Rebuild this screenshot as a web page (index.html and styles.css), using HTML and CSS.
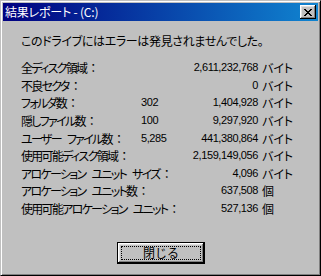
FILE: index.html
```html
<!DOCTYPE html>
<html lang="ja">
<head>
<meta charset="utf-8">
<title>結果レポート</title>
<link rel="stylesheet" href="styles.css">
</head>
<body>
<div class="window">
  <div class="titlebar">
    <span class="title">結果レポート - (C:)</span>
    <button class="close" aria-label="閉じる">
      <svg width="8" height="7" viewBox="0 0 8 7" shape-rendering="crispEdges"><path d="M0 0h2v1h-2zM6 0h2v1h-2zM1 1h2v1h-2zM5 1h2v1h-2zM2 2h4v1h-4zM3 3h2v1h-2zM2 4h4v1h-4zM1 5h2v1h-2zM5 5h2v1h-2zM0 6h2v1h-2zM6 6h2v1h-2z" fill="#000"/></svg>
    </button>
  </div>
  <div class="body">
    <p class="msg">このドライブにはエラーは発見されませんでした。</p>
    <div class="stats">
      <div class="row"><span class="label">全ディスク領域<span class="colon">：</span></span><span class="num">2,611,232,768</span><span class="unit">バイト</span></div>
      <div class="row"><span class="label">不良セクタ<span class="colon">：</span></span><span class="num">0</span><span class="unit">バイト</span></div>
      <div class="row"><span class="label">フォルダ数<span class="colon">：</span></span><span class="mid">302</span><span class="num">1,404,928</span><span class="unit">バイト</span></div>
      <div class="row"><span class="label">隠しファイル数<span class="colon">：</span></span><span class="mid">100</span><span class="num">9,297,920</span><span class="unit">バイト</span></div>
      <div class="row"><span class="label">ユーザー ファイル数<span class="colon">：</span></span><span class="mid">5,285</span><span class="num">441,380,864</span><span class="unit">バイト</span></div>
      <div class="row"><span class="label">使用可能ディスク領域<span class="colon">：</span></span><span class="num">2,159,149,056</span><span class="unit">バイト</span></div>
      <div class="row"><span class="label">アロケーション ユニット サイズ<span class="colon">：</span></span><span class="num">4,096</span><span class="unit">バイト</span></div>
      <div class="row"><span class="label">アロケーション ユニット数<span class="colon">：</span></span><span class="num">637,508</span><span class="unit">個</span></div>
      <div class="row"><span class="label">使用可能アロケーション ユニット<span class="colon">：</span></span><span class="num">527,136</span><span class="unit">個</span></div>
    </div>
    <div class="actions">
      <button class="btn"><span class="focus">閉じる</span></button>
    </div>
  </div>
</div>
</body>
</html>
```
FILE: styles.css
```css
* { box-sizing: border-box; }
html, body { margin: 0; padding: 0; background: #c0c0c0; }
body {
  font-family: "Noto Sans CJK JP", "Noto Sans", sans-serif;
  font-size: 12px;
  color: #000;
}
.window {
  width: 321px;
  height: 276px;
  background: #c0c0c0;
  border: 1px solid;
  border-color: #c0c0c0 #000 #000 #c0c0c0;
  box-shadow: inset 1px 1px #fff, inset -1px -1px #808080;
  padding: 2px;
  display: flex;
  flex-direction: column;
}
.titlebar {
  height: 18px;
  flex: none;
  background: linear-gradient(to right, #000080, #1084d0);
  display: flex;
  align-items: center;
  justify-content: space-between;
  padding: 0 2px 0 2px;
}
.title {
  color: #fff;
  font-size: 12px;
  line-height: 14px;
  font-feature-settings: "palt";
  letter-spacing: -0.2px;
}
.close {
  width: 16px;
  height: 14px;
  padding: 0;
  margin: 0;
  border: none;
  background: #c0c0c0;
  box-shadow: inset -1px -1px #000, inset 1px 1px #fff, inset -2px -2px #808080, inset 2px 2px #dfdfdf;
  display: flex;
  align-items: center;
  justify-content: center;
}
.close svg { display: block; margin-left: -1px; }
.body {
  flex: 1;
  padding: 11px 0 0 18px;
  display: flex;
  flex-direction: column;
}
.msg {
  margin: 0 0 9.4px 0;
  line-height: 17.625px;
  font-feature-settings: "palt";
  letter-spacing: -0.35px;
  white-space: nowrap;
}
.stats {
  display: flex;
  flex-direction: column;
}
.row {
  display: grid;
  grid-template-columns: 120px 24px 93px auto;
  line-height: 17.625px;
  white-space: nowrap;
}
.label {
  grid-row: 1;
  grid-column: 1 / 4;
  font-feature-settings: "palt";
  letter-spacing: -1.7px;
  word-spacing: 5px;
}
.colon {
  font-feature-settings: normal;
  letter-spacing: 0;
  margin-left: 1px;
}
.mid {
  grid-row: 1;
  grid-column: 2;
}
.num {
  grid-row: 1;
  grid-column: 3;
  text-align: right;
}
.mid, .num {
  font-family: "Liberation Sans", sans-serif;
  font-size: 11px;
  letter-spacing: -0.4px;
}
.unit {
  grid-row: 1;
  grid-column: 4;
  padding-left: 4px;
  font-feature-settings: "palt";
}
.actions {
  display: flex;
  justify-content: center;
  margin-top: 24px;
  padding-right: 18px;
}
.btn {
  width: 88px;
  height: 22px;
  padding: 3px;
  margin: 0 0 0 1px;
  border: 1px solid #000;
  background: #c0c0c0;
  box-shadow: inset -1px -1px #000, inset 1px 1px #fff, inset -2px -2px #808080, inset 2px 2px #dfdfdf;
  font: inherit;
  color: #000;
  display: flex;
}
.focus {
  flex: 1;
  border: 1px dotted #000;
  display: flex;
  align-items: center;
  justify-content: center;
  line-height: 12px;
}
```
